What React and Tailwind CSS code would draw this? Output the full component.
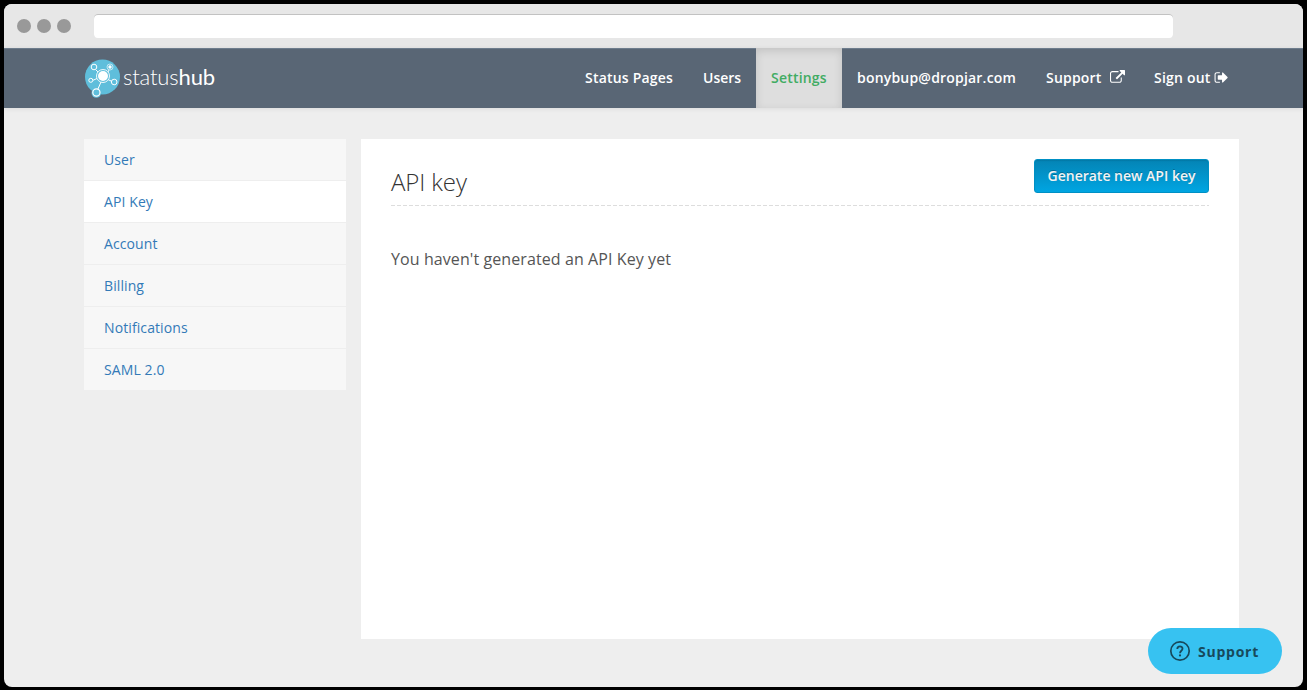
import React from "react";

const tabs = ["User", "API Key", "Account", "Billing", "Notifications", "SAML 2.0"];

function ExternalLinkIcon() {
  return (
    <svg className="h-[15px] w-[15px] shrink-0" viewBox="0 0 1792 1792" fill="currentColor">
      <path d="M1408 928v320q0 119-84.5 203.5t-203.5 84.5h-832q-119 0-203.5-84.5t-84.5-203.5v-832q0-119 84.5-203.5t203.5-84.5h704q14 0 23 9t9 23v64q0 14-9 23t-23 9h-704q-66 0-113 47t-47 113v832q0 66 47 113t113 47h832q66 0 113-47t47-113v-320q0-14 9-23t23-9h64q14 0 23 9t9 23zm384-864v512q0 26-19 45t-45 19-45-19l-176-176-652 652q-10 10-23 10t-23-10l-114-114q-10-10-10-23t10-23l652-652-176-176q-19-19-19-45t19-45 45-19h512q26 0 45 19t19 45z" />
    </svg>
  );
}

function SignOutIcon() {
  return (
    <svg className="h-[15px] w-[15px] shrink-0" viewBox="0 0 1792 1792" fill="currentColor">
      <path d="M704 1440q0 4 1 20t.5 26.5-3 23.5-10 19.5-20.5 6.5h-320q-119 0-203.5-84.5t-84.5-203.5v-704q0-119 84.5-203.5t203.5-84.5h320q13 0 22.5 9.5t9.5 22.5q0 4 1 20t.5 26.5-3 23.5-10 19.5-20.5 6.5h-320q-66 0-113 47t-47 113v704q0 66 47 113t113 47h312l11.5 1 11.5 3 8 5.5 7 9 2 13.5zm928-544q0 26-19 45l-544 544q-19 19-45 19t-45-19-19-45v-288h-448q-26 0-45-19t-19-45v-384q0-26 19-45t45-19h448v-288q0-26 19-45t45-19 45 19l544 544q19 19 19 45z" />
    </svg>
  );
}

function Logo() {
  return (
    <a className="flex items-center text-white">
      <svg className="h-[40px] w-[36px]" viewBox="0 0 36 40" fill="none" stroke="#fff">
        <circle cx="17.5" cy="18" r="17.5" fill="#5fbedb" stroke="none" />
        <circle cx="11.3" cy="34" r="4.8" fill="#5fbedb" stroke="none" />
        <path d="M11 11 14 14M23 13 24 11M12 19.5 7.5 21.5M23 20.5 27 22.5M16 23 12.5 31" />
        <g fill="#5fbedb">
          <circle cx="18" cy="17" r="6.5" strokeWidth="0.9" />
          <circle cx="9" cy="8" r="2.8" />
          <circle cx="25" cy="8" r="3" strokeWidth="0.6" />
          <circle cx="5.8" cy="21.3" r="2" />
          <circle cx="29.2" cy="23" r="2.8" />
          <circle cx="11.4" cy="33.5" r="3.6" strokeWidth="1.2" />
        </g>
        <circle cx="18" cy="17" r="5" fill="#fff" stroke="none" />
        <circle cx="25" cy="8" r="1.7" fill="#fff" stroke="none" />
      </svg>
      <span className="ml-[2px] pb-[3px] font-['Lato',sans-serif] text-[22px] font-light leading-none tracking-[-0.15px]">
        status<span className="font-normal">hub</span>
      </span>
    </a>
  );
}

export default function App() {
  return (
    <div className="h-[690px] w-full overflow-hidden bg-black px-1 pt-1 font-['Open_Sans',sans-serif]">
      <div className="relative flex h-[683px] w-[1299px] flex-col overflow-hidden rounded-lg bg-[#eee]">
        <div className="flex h-11 shrink-0 items-center bg-[#e7e7e7] pl-[13px]">
          <div className="flex gap-[6px]">
            <span className="size-[14px] rounded-full bg-[#999]" />
            <span className="size-[14px] rounded-full bg-[#999]" />
            <span className="size-[14px] rounded-full bg-[#999]" />
          </div>
          <div className="ml-[23px] h-6 w-[1079px] rounded bg-white shadow-[inset_0_1px_0_#c2c2c2]" />
        </div>

        <header className="flex h-[60px] shrink-0 justify-between border-t border-[#6d7c8c] bg-[#596675] pl-[81px] pr-[61px] shadow-[0_1px_5px_rgba(0,0,0,0.08)]">
          <Logo />
          <nav className="flex text-[14px] font-semibold tracking-[0.2px] text-white">
            <a className="flex w-[118px] items-center pb-[3px] pl-[15px]">Status Pages</a>
            <a className="flex w-[68px] items-center pb-[3px] pl-[15px] tracking-normal">Users</a>
            <a className="-mt-px flex w-[86px] items-center bg-[#dedede] pb-[2px] pl-[15px] text-[#41ac63] shadow-[inset_0_3px_8px_rgba(0,0,0,0.125)]">Settings</a>
            <a className="flex w-[189px] items-center pb-[3px] pl-[15px]">bonybup@dropjar.com</a>
            <a className="flex w-[108px] items-center gap-2 pb-[3px] pl-[15px]">Support <ExternalLinkIcon /></a>
            <a className="flex w-[103px] items-center gap-1 pb-[3px] pl-[15px]">Sign out <SignOutIcon /></a>
          </nav>
        </header>

        <div className="flex items-start gap-[15px] pl-[80px] pt-[31px]">
          <aside className="flex w-[262px] flex-col text-[14px] tracking-[0.1px] text-[#337ab7]">
            {tabs.map((tab) => (
              <a
                key={tab}
                className={`flex h-[42px] items-center border-b border-[#eee] pl-5 ${tab === "API Key" ? "bg-white" : "bg-[#f7f7f7]"}`}
              >
                {tab}
              </a>
            ))}
          </aside>
          <main className="h-[500px] w-[878px] bg-white px-[30px] pt-5">
            <div className="flex h-[46px] justify-between">
              <h1 className="pt-[5px] text-[24px] font-light leading-9 tracking-[-0.1px] text-[#333]">API key</h1>
              <button className="h-[34px] w-[175px] rounded-[3px] border border-[#0090c4] bg-linear-to-b from-[#0484b5] to-[#00a5e2] pb-[2px] text-[14px] font-semibold text-[#f3f3f3] shadow-[inset_0_1px_1px_rgba(0,0,0,0.08)] [text-shadow:0_-1px_0_rgba(0,0,0,0.25)]">
                Generate new API key
              </button>
            </div>
            <div className="h-px bg-[repeating-linear-gradient(to_right,#ddd_0_4px,transparent_4px_6px)]" />
            <p className="mt-[41px] text-[16px] leading-6 tracking-[0.09px] text-[#555]">You haven't generated an API Key yet</p>
          </main>
        </div>

        <button className="absolute bottom-[13px] right-[21px] flex h-[46px] w-[134px] items-center rounded-full bg-[#37c2f1] pl-[21px] text-[#17495b]">
          <svg className="size-[22px]" viewBox="0 0 22 22" fill="none" stroke="currentColor" strokeWidth="1.7">
            <circle cx="11" cy="11" r="9.2" />
            <path d="M8.3 9C8.3 5.5 13.6 5.6 13.5 8.8 13.5 10.8 11 10.7 11 13.2" strokeWidth="1.8" />
            <circle cx="11" cy="15.4" r="1.1" fill="currentColor" stroke="none" />
          </svg>
          <span className="ml-[7px] text-[14px] font-bold tracking-[0.75px]">Support</span>
        </button>
      </div>
    </div>
  );
}
